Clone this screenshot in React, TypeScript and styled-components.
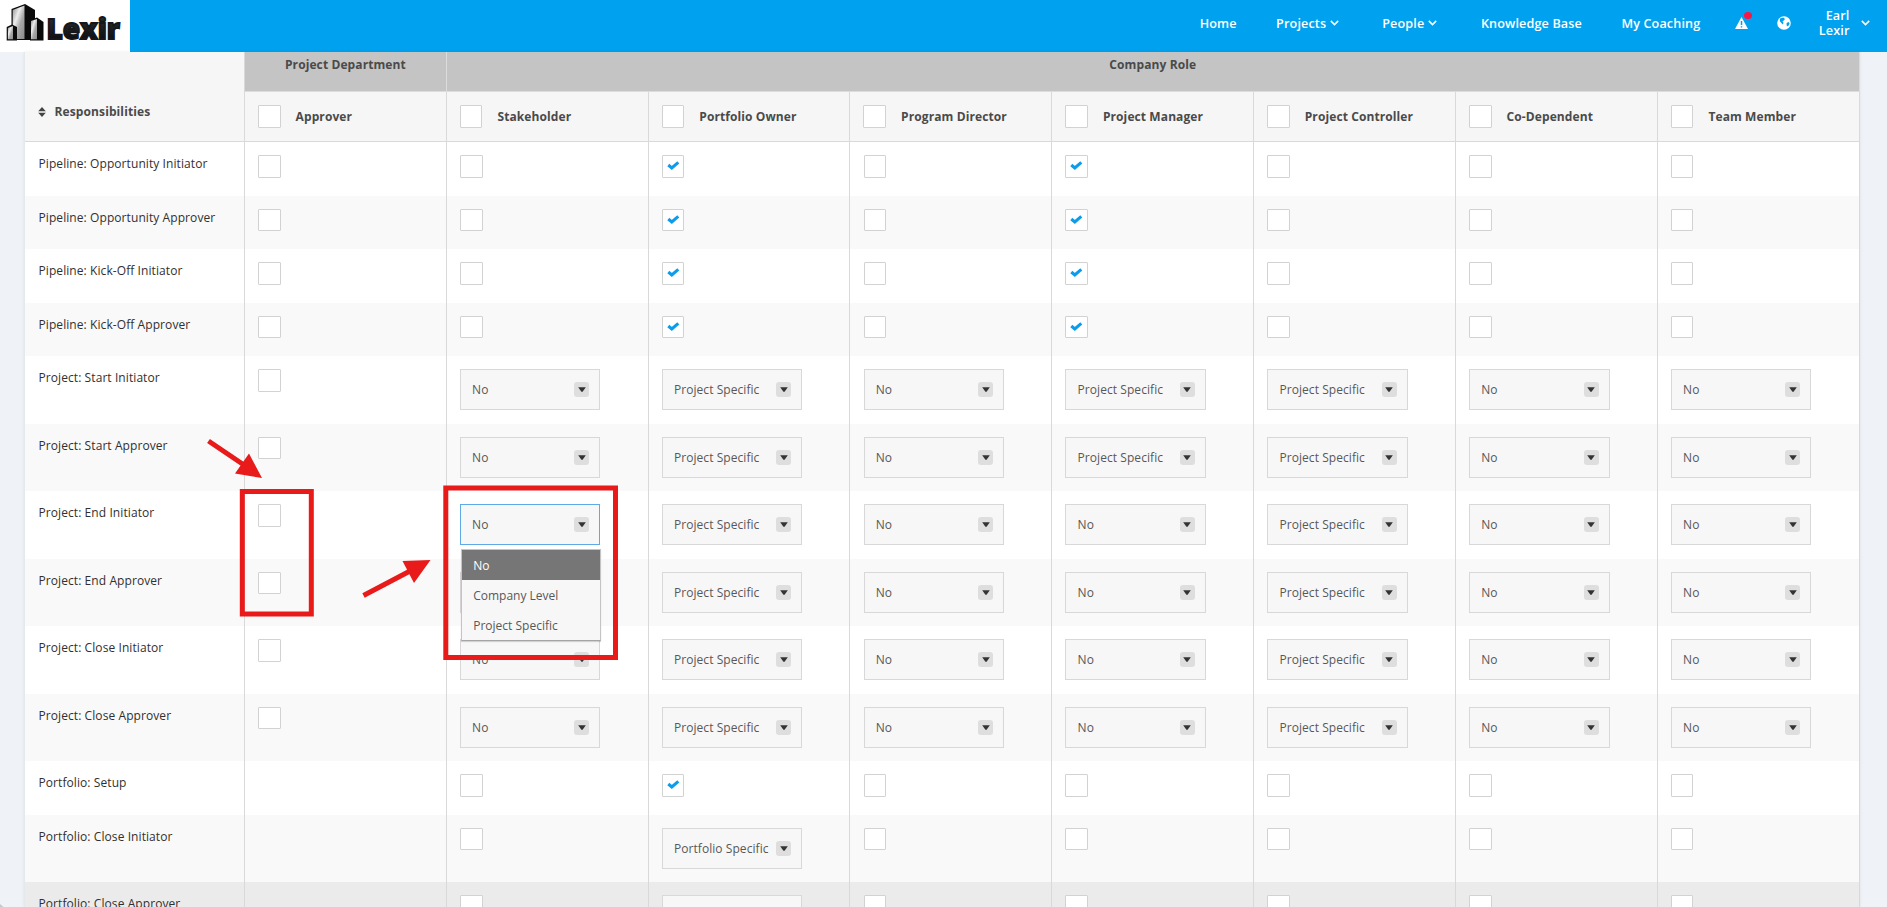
import React from 'react';
import styled, { createGlobalStyle } from 'styled-components';

const Global = createGlobalStyle`
  * { box-sizing: border-box; }
  html, body { margin: 0; height: 907px; overflow: hidden; }
  body { background: #eff3f7; font-family: "Open Sans", "Noto Sans", sans-serif; font-size: 12px; color: #303030; }
`;

const Page = styled.div`
  position: relative;
  width: 1887px;
  height: 907px;
  overflow: hidden;
  display: flex;
  flex-direction: column;
`;

const TopBar = styled.header`
  height: 52px;
  flex: none;
  background: #00a1ef;
  display: flex;
  align-items: stretch;
  color: #fff;
`;

const LogoBox = styled.div`
  width: 130px;
  background: #fff;
`;

const Nav = styled.nav`
  flex: 1;
  display: flex;
  align-items: center;
  justify-content: flex-end;
  padding: 0 17.5px 6px 0;
  font-size: 12.6px;
  font-weight: 600;
  letter-spacing: 0.14px;
`;

const NavItem = styled.a<{ $gap: number }>`
  display: flex;
  align-items: center;
  gap: 4px;
  margin-right: ${p => p.$gap}px;
  white-space: nowrap;
  line-height: 15px;
  text-align: right;
`;

const AlertWrap = styled(NavItem)`
  position: relative;
`;

const AlertDot = styled.span`
  position: absolute;
  width: 8px;
  height: 7px;
  border-radius: 50%;
  background: #fb1545;
  top: -5px;
  left: 9px;
`;

const Card = styled.main`
  width: 1836px;
  margin-left: 24px;
  flex: 1;
  min-height: 0;
  overflow: hidden;
  background: #fff;
  border-left: 1px solid #e6e9ec;
  box-shadow: 0 0 3px rgba(0, 0, 0, 0.08);
`;

const HeaderGrid = styled.div`
  display: grid;
  grid-template-columns: 220px repeat(8, 201.84px);
  grid-template-rows: 40px 50px;
  background: #f6f6f6;
  font-weight: 700;
  letter-spacing: 0.1px;
  color: #4a4a4a;
`;

const FirstHead = styled.div`
  grid-row: 1 / 3;
  display: flex;
  align-items: center;
  gap: 8.6px;
  padding: 30px 0 0 13px;
  border-right: 1px solid #d9d9d9;
  border-bottom: 1px solid #d9d9d9;
`;

const GroupHead = styled.div<{ $span: number }>`
  grid-column: span ${p => p.$span};
  background: #c4c4c4;
  border-right: 1px solid #dcdcdc;
  border-bottom: 1px solid #dcdcdc;
  text-align: center;
  line-height: 18px;
  padding-top: 4px;
`;

const RoleHead = styled.div`
  display: flex;
  align-items: center;
  gap: 15px;
  padding-left: 13px;
  border-right: 1px solid #d9d9d9;
  border-bottom: 1px solid #d9d9d9;
`;

const Row = styled.div<{ $tall: boolean; $bg: string }>`
  display: grid;
  grid-template-columns: 220px repeat(8, 201.84px);
  height: ${p => (p.$tall ? 67.5 : 53.5)}px;
  background: ${p => p.$bg};
`;

const Cell = styled.div`
  border-right: 1px solid #d9d9d9;
  padding: 13.1px 0 0 13.1px;
`;

const NameCell = styled(Cell)`
  padding: 13.2px 0 0 13.5px;
  line-height: 18px;
  letter-spacing: 0.08px;
  white-space: nowrap;
`;

const Box = styled.span`
  width: 22.6px;
  height: 22.5px;
  flex: none;
  display: flex;
  align-items: center;
  justify-content: center;
  background: #fff;
  border: 1px solid #d2d2d2;
  border-radius: 1px;
`;

const Select = styled.div<{ $open?: boolean }>`
  position: relative;
  width: 140.5px;
  height: 41px;
  display: flex;
  align-items: center;
  justify-content: space-between;
  padding: 0 10px 0 11.2px;
  background: #f7f7f7;
  border: 1px solid ${p => (p.$open ? '#5fa9e6' : '#d8d8d8')};
  color: #585858;
  letter-spacing: 0.06px;
  white-space: nowrap;
`;

const Arrow = styled.span`
  width: 15px;
  height: 15px;
  border-radius: 3px;
  background: #dedede;
  display: flex;
  align-items: center;
  justify-content: center;
`;

const Menu = styled.div`
  position: absolute;
  z-index: 2;
  left: 0;
  top: 44px;
  width: 140px;
  background: #f7f7f7;
  border: 1px solid #c4c4c4;
  border-bottom-color: #a4a4a4;
  box-shadow: 0 1px 1px rgba(0, 0, 0, 0.15);
  letter-spacing: 0;
`;

const Option = styled.div<{ $active?: boolean }>`
  height: 30px;
  line-height: 31px;
  padding-left: 11.3px;
  background: ${p => (p.$active ? '#767676' : 'transparent')};
  color: ${p => (p.$active ? '#fff' : '#585858')};
`;

const Annotations = styled.svg`
  position: absolute;
  left: 0;
  top: 0;
  z-index: 5;
  pointer-events: none;
`;

const Chevron = () => (
  <svg width="9" height="6" viewBox="0 0 9 6" fill="none" stroke="#fff" strokeWidth="1.5">
    <path d="M.8 .9 4.5 4.6 8.2 .9" />
  </svg>
);

const Logo = () => (
  <svg width="130" height="52" viewBox="0 0 130 52">
    <defs>
      <linearGradient id="steel" x1="0" y1="0" x2="1" y2="1">
        <stop offset="0" stopColor="#8c8c8c" />
        <stop offset="0.35" stopColor="#ededed" />
        <stop offset="0.6" stopColor="#a8a8a8" />
        <stop offset="1" stopColor="#8a8a8a" />
      </linearGradient>
      <linearGradient id="ink" x1="0" y1="0" x2="0" y2="1">
        <stop offset="0" stopColor="#34383d" />
        <stop offset="1" stopColor="#050505" />
      </linearGradient>
    </defs>
    <path d="M11.5 9 25 4 35 10V40H11.5Z" fill="#0a0a0a" />
    <path d="M12.7 10 24.5 5.5V39H12.7Z" fill="url(#steel)" />
    <path d="M6.7 27 12 24.5 17 27V40.5H6.7Z" fill="#0a0a0a" />
    <path d="M7.9 28 13 26V39.3H7.9Z" fill="url(#steel)" />
    <path d="M30 20 37 17.5 43.5 22V40.5H30Z" fill="#0a0a0a" />
    <path d="M31 21 37 19V39.3H31Z" fill="url(#steel)" />
    <text x="46.5" y="39.3" textLength="73.5" lengthAdjust="spacingAndGlyphs" fontFamily="Open Sans" fontWeight="800" fontSize="29" fill="url(#ink)" stroke="#15171a" strokeWidth="1.8">Lexir</text>
  </svg>
);

const Check = ({ on }: { on?: boolean }) => (
  <Box>
    {on && (
      <svg width="13" height="10" viewBox="0 0 13 10" fill="none" stroke="#0d9cec" strokeWidth="3.1">
        <path d="M1.3 4 4.8 6.9 11.3 1.4" />
      </svg>
    )}
  </Box>
);

const Dropdown = ({ value, open }: { value: string; open?: boolean }) => (
  <Select $open={open}>
    {value}
    <Arrow>
      <svg width="8" height="5" viewBox="0 0 8 5"><path d="M.2 .3H7.8L4.6 4.7H3.4Z" fill="#333" /></svg>
    </Arrow>
    {open && (
      <Menu>
        <Option $active>No</Option>
        <Option>Company Level</Option>
        <Option>Project Specific</Option>
      </Menu>
    )}
  </Select>
);

const roles = ['Approver', 'Stakeholder', 'Portfolio Owner', 'Program Director', 'Project Manager', 'Project Controller', 'Co-Dependent', 'Team Member'];

/* Cell codes: - empty, o unchecked, x checked, N "No", P "Project Specific", F "Portfolio Specific", M opened menu */
const rows: [string, string][] = [
  ['Pipeline: Opportunity Initiator', 'ooxoxooo'],
  ['Pipeline: Opportunity Approver', 'ooxoxooo'],
  ['Pipeline: Kick-Off Initiator', 'ooxoxooo'],
  ['Pipeline: Kick-Off Approver', 'ooxoxooo'],
  ['Project: Start Initiator', 'oNPNPPNN'],
  ['Project: Start Approver', 'oNPNPPNN'],
  ['Project: End Initiator', 'oMPNNPNN'],
  ['Project: End Approver', 'oNPNNPNN'],
  ['Project: Close Initiator', 'oNPNNPNN'],
  ['Project: Close Approver', 'oNPNNPNN'],
  ['Portfolio: Setup', '-oxooooo'],
  ['Portfolio: Close Initiator', '-oFooooo'],
  ['Portfolio: Close Approver', '-oFooooo'],
];

const labels: Record<string, string> = { N: 'No', M: 'No', P: 'Project Specific', F: 'Portfolio Specific' };

const renderCell = (code: string) => {
  if (code === '-') return null;
  if (code === 'o' || code === 'x') return <Check on={code === 'x'} />;
  return <Dropdown value={labels[code]} open={code === 'M'} />;
};

export default function App() {
  return (
    <Page>
      <Global />
      <TopBar>
        <LogoBox><Logo /></LogoBox>
        <Nav>
          <NavItem $gap={39.5}>Home</NavItem>
          <NavItem $gap={43}>Projects <Chevron /></NavItem>
          <NavItem $gap={43.5}>People <Chevron /></NavItem>
          <NavItem $gap={39.5}>Knowledge Base</NavItem>
          <NavItem $gap={34.5}>My Coaching</NavItem>
          <AlertWrap $gap={29.5}>
            <svg width="13" height="12" viewBox="0 0 13 12">
              <path d="M6.5 0 13 12H0Z" fill="#fff" />
              <path d="M6.5 4V8M6.5 9.2V10.6" stroke="#00a1ef" strokeWidth="1.5" />
            </svg>
            <AlertDot />
          </AlertWrap>
          <NavItem $gap={27.5}>
            <svg width="14" height="14" viewBox="0 0 14 14">
              <circle cx="7" cy="7" r="6.8" fill="#fff" />
              <path d="M3 2.6 6.4 1.6 8 3 6.8 4.6 5.4 5.6 6.6 6.8 5.8 8.4 4.2 6.8 2.8 5.2ZM9.6 7 11.6 6 12.6 7.6 11 10.4 9.6 9.4Z" fill="#00a1ef" />
            </svg>
          </NavItem>
          <NavItem $gap={11}>Earl<br />Lexir</NavItem>
          <Chevron />
        </Nav>
      </TopBar>
      <Card>
        <HeaderGrid>
          <FirstHead>
            <svg width="8" height="10" viewBox="0 0 8 10"><path d="M4 0 7.8 4.2H.2ZM4 10 .2 5.8H7.8Z" fill="#444" /></svg>
            Responsibilities
          </FirstHead>
          <GroupHead $span={1}>Project Department</GroupHead>
          <GroupHead $span={7}>Company Role</GroupHead>
          {roles.map(r => <RoleHead key={r}><Check />{r}</RoleHead>)}
        </HeaderGrid>
        {rows.map(([name, codes], i) => (
          <Row key={name} $tall={/[NPFM]/.test(codes)} $bg={i === 12 ? '#ebebeb' : i % 2 ? '#f9f9f9' : '#fff'}>
            <NameCell>{name}</NameCell>
            {codes.split('').map((c, j) => <Cell key={j}>{renderCell(c)}</Cell>)}
          </Row>
        ))}
      </Card>
      <Annotations width="1887" height="907" viewBox="0 0 1887 907">
        <g fill="none" stroke="#e81a1a" strokeWidth="5">
          <rect x="242.3" y="491.5" width="69" height="122.5" />
          <rect x="445.8" y="488" width="169.7" height="169.5" />
          <path d="M208.5 441 244 465M363.5 595.5 411 570.5" />
        </g>
        <path d="M249 453.5 262 478 235 473.5ZM402.5 561 430.5 560 414 583Z" fill="#e81a1a" />
        <path d="M0 904 3.5 907H0Z" fill="#c6c8ca" />
      </Annotations>
    </Page>
  );
}
